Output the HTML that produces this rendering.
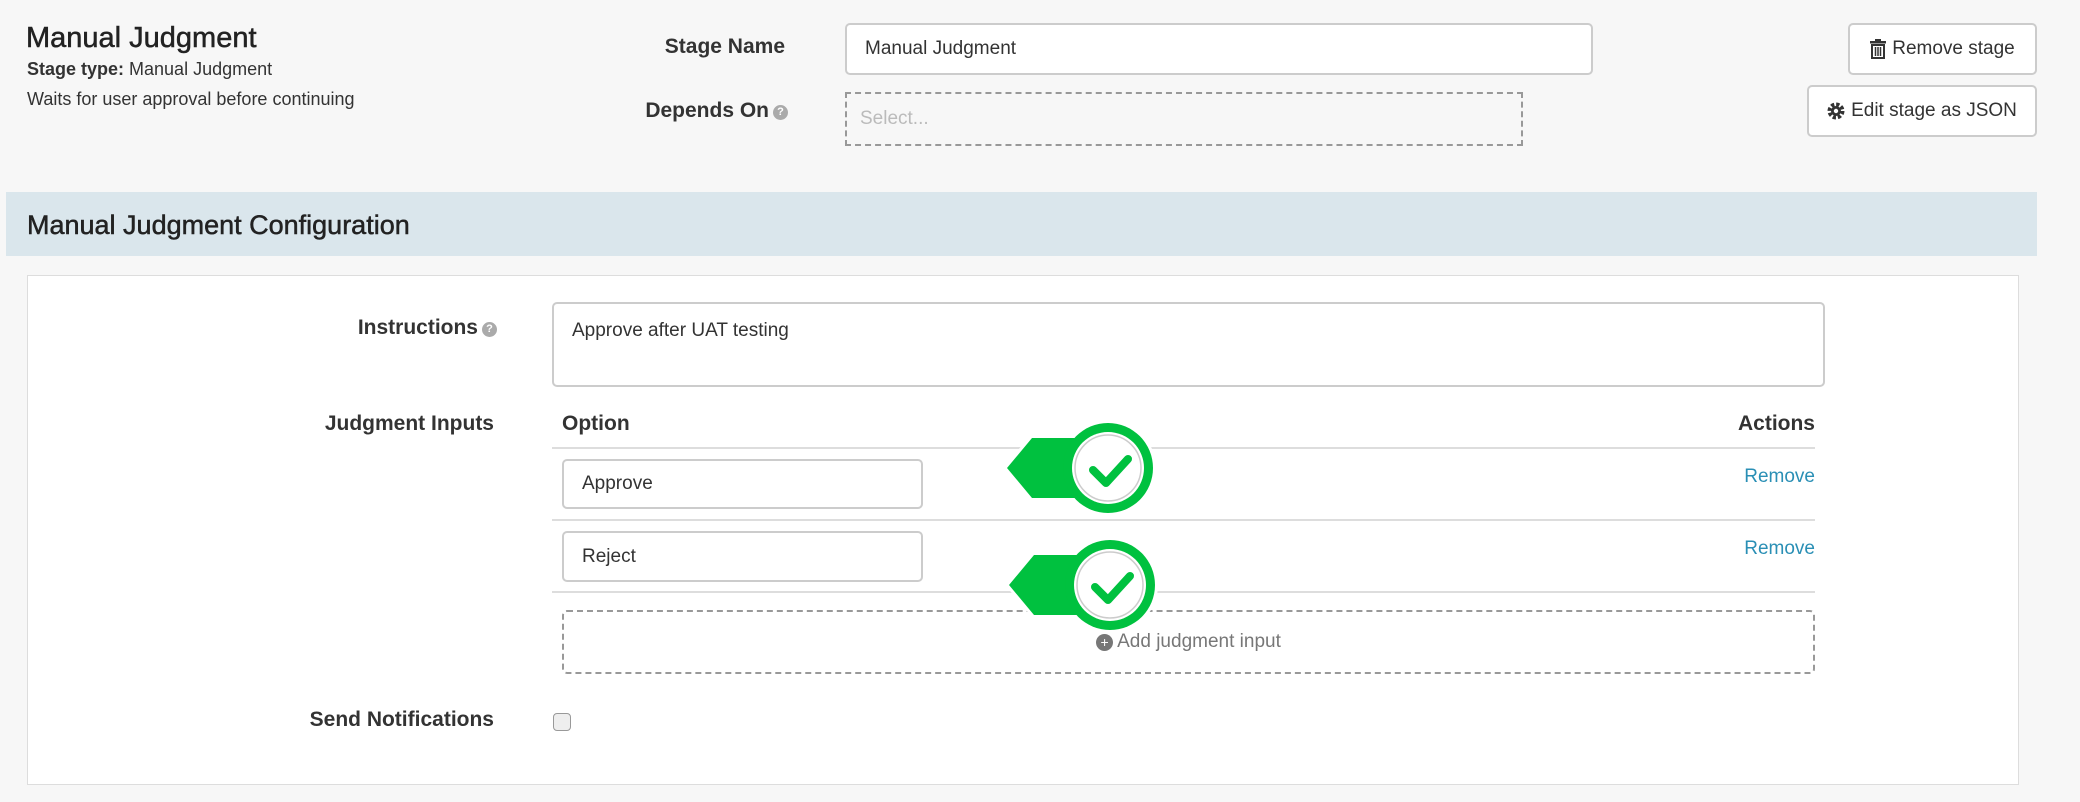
<!DOCTYPE html>
<html><head><meta charset="utf-8"><style>
*{box-sizing:border-box;margin:0;padding:0}
body{width:2080px;height:802px;background:#f7f7f7;font-family:"Liberation Sans",sans-serif;color:#333;position:relative;overflow:hidden}
.a{position:absolute;white-space:nowrap}
.lbl{font-weight:bold;font-size:21px;text-align:right}
.inp{position:absolute;background:#fff;border:2px solid #ccc;border-radius:5px;font-size:19px;padding-left:18px;display:flex;align-items:center;color:#333}
.q{display:inline-block;width:15px;height:15px;border-radius:50%;background:#aaa;color:#fff;font-size:11px;text-align:center;line-height:15px;vertical-align:2px;margin-left:4px}
.btn{position:absolute;background:#fff;border:2px solid #ccc;border-radius:5px;font-size:19px;display:flex;align-items:center;justify-content:center;gap:6px}
.line{position:absolute;height:2px;background:#ddd;left:552px;width:1263px}
.rm{position:absolute;color:#2a8fb5;font-size:19px;right:265px}
</style></head><body>
<div class="a" style="left:26px;top:22px;font-size:29px;color:#222;-webkit-text-stroke:0.5px #222">Manual Judgment</div>
<div class="a" style="left:27px;top:59px;font-size:18px"><b>Stage type:</b> Manual Judgment</div>
<div class="a" style="left:27px;top:89px;font-size:18px">Waits for user approval before continuing</div>

<div class="a lbl" style="right:1295px;top:35px">Stage Name</div>
<div class="inp" style="left:845px;top:23px;width:748px;height:52px">Manual Judgment</div>
<div class="a lbl" style="right:1292px;top:99px">Depends On<span class="q">?</span></div>
<div class="inp" style="left:845px;top:92px;width:678px;height:54px;border:2px dashed #999;border-radius:0;color:#bbb;background:transparent;padding-left:13px">Select...</div>

<div class="btn" style="left:1848px;top:23px;width:189px;height:52px"><svg width="16" height="20" viewBox="0 0 16 20"><rect x="5" y="0" width="6" height="2" fill="#333"/><rect x="0" y="2" width="16" height="2.5" fill="#333"/><path d="M2 6h12v13H2z" fill="none" stroke="#333" stroke-width="2"/><path d="M5.5 8v9M8 8v9M10.5 8v9" stroke="#333" stroke-width="1.5"/></svg>Remove stage</div>
<div class="btn" style="left:1807px;top:85px;width:230px;height:52px"><svg width="18" height="18" viewBox="0 0 18 18"><circle cx="9" cy="9" r="6.5" fill="none" stroke="#333" stroke-width="4" stroke-dasharray="3.2 1.9"/><circle cx="9" cy="9" r="5" fill="#333"/><circle cx="9" cy="9" r="2.2" fill="#fff"/></svg>Edit stage as JSON</div>

<div class="a" style="left:6px;top:192px;width:2031px;height:64px;background:#dae6ec"></div>
<div class="a" style="left:27px;top:210px;font-size:27px;color:#222;-webkit-text-stroke:0.5px #222">Manual Judgment Configuration</div>

<div class="a" style="left:27px;top:275px;width:1992px;height:510px;background:#fff;border:1px solid #ddd"></div>

<div class="a lbl" style="right:1583px;top:316px">Instructions<span class="q">?</span></div>
<div class="inp" style="left:552px;top:302px;width:1273px;height:85px;align-items:flex-start;padding-top:16px">Approve after UAT testing</div>

<div class="a lbl" style="right:1586px;top:412px">Judgment Inputs</div>
<div class="a lbl" style="left:562px;top:412px">Option</div>
<div class="a lbl" style="right:265px;top:412px">Actions</div>
<div class="line" style="top:447px"></div>
<div class="inp" style="left:562px;top:459px;width:361px;height:50px">Approve</div>
<div class="rm" style="top:466px">Remove</div>
<div class="line" style="top:519px"></div>
<div class="inp" style="left:562px;top:531px;width:361px;height:51px">Reject</div>
<div class="rm" style="top:538px">Remove</div>
<div class="line" style="top:591px"></div>
<div class="a" style="left:562px;top:610px;width:1253px;height:64px;border:2px dashed #999;border-radius:5px;display:flex;align-items:center;justify-content:center;font-size:19px;color:#777"><span style="display:inline-block;width:17px;height:17px;border-radius:50%;background:#777;color:#fff;font-size:14px;line-height:17px;text-align:center;margin-right:4px">+</span>Add judgment input</div>

<div class="a lbl" style="right:1586px;top:708px">Send Notifications</div>
<div class="a" style="left:553px;top:713px;width:18px;height:18px;border:1.5px solid #999;border-radius:4px;background:#eee"></div>

<svg class="a" style="left:0;top:0" width="2080" height="802">
<defs><g id="b">
<path d="M-101 0 L-76 -30 L-20 -30 L-20 30 L-76 30 Z" fill="#fff" stroke="#fff" stroke-width="6" stroke-linejoin="round"/>
<circle r="48" fill="#fff"/>
<path d="M-101 0 L-76 -30 L-20 -30 L-20 30 L-76 30 Z" fill="#00c13f"/>
<circle r="45" fill="#00c13f"/>
<circle r="36" fill="#fff"/>
<circle r="33" fill="#fff" stroke="#ccc" stroke-width="1.5"/>
<path d="M-15 2 L-2 15 L20 -9" fill="none" stroke="#00c13f" stroke-width="8" stroke-linecap="round" stroke-linejoin="round"/>
</g></defs>
<use href="#b" x="1108" y="468"/>
<use href="#b" x="1110" y="585"/>
</svg>
</body></html>
